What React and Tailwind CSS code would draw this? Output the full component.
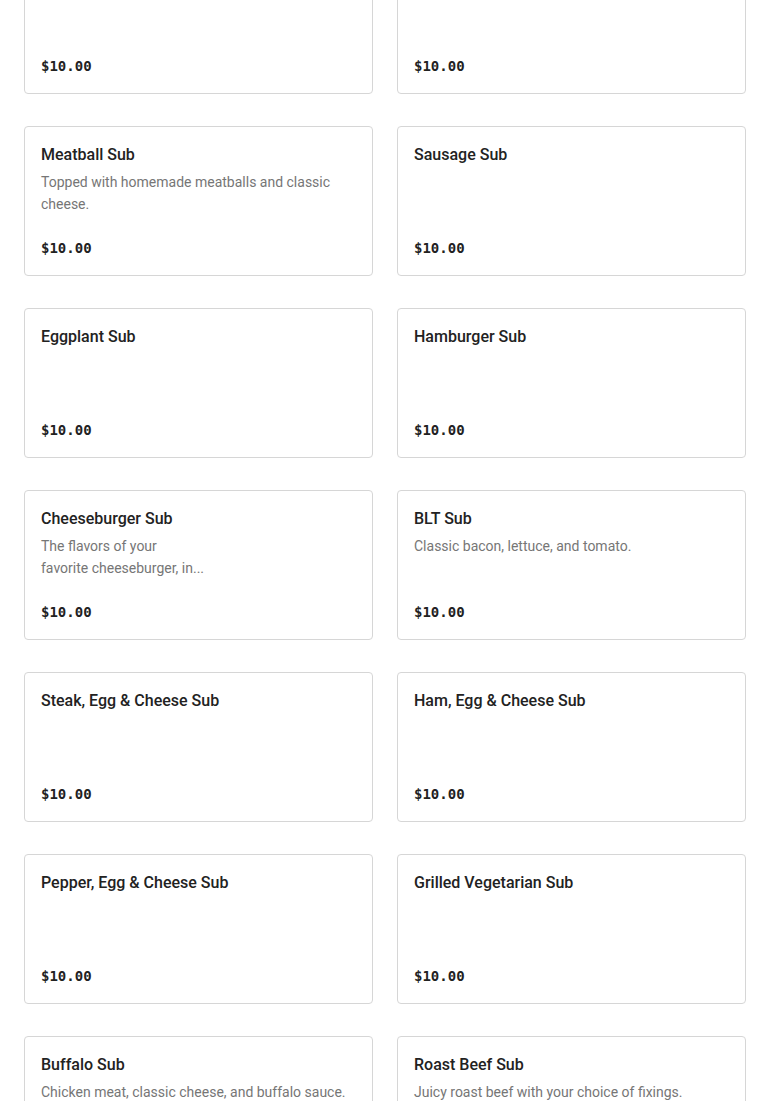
import React from 'react';

const items = [
  { name: 'Italian Sub', desc: '', price: '$10.00' },
  { name: 'Chicken Parm Sub', desc: '', price: '$10.00' },
  { name: 'Meatball Sub', desc: 'Topped with homemade meatballs and classic cheese.', price: '$10.00' },
  { name: 'Sausage Sub', desc: '', price: '$10.00' },
  { name: 'Eggplant Sub', desc: '', price: '$10.00' },
  { name: 'Hamburger Sub', desc: '', price: '$10.00' },
  { name: 'Cheeseburger Sub', desc: ['The flavors of your', 'favorite cheeseburger, in...'], price: '$10.00' },
  { name: 'BLT Sub', desc: 'Classic bacon, lettuce, and tomato.', price: '$10.00' },
  { name: 'Steak, Egg & Cheese Sub', desc: '', price: '$10.00' },
  { name: 'Ham, Egg & Cheese Sub', desc: '', price: '$10.00' },
  { name: 'Pepper, Egg & Cheese Sub', desc: '', price: '$10.00' },
  { name: 'Grilled Vegetarian Sub', desc: '', price: '$10.00' },
  { name: 'Buffalo Sub', desc: 'Chicken meat, classic cheese, and buffalo sauce.', price: '$10.00' },
  { name: 'Roast Beef Sub', desc: 'Juicy roast beef with your choice of fixings.', price: '$10.00' },
];

const MenuCard = ({ item }) => (
  <div className="h-[150px] bg-white border border-[#d6d6d6] rounded-[4px] px-4 py-4 flex flex-col justify-between">
    <div>
      <h3 className="text-base leading-6 font-medium text-[#222222]">{item.name}</h3>
      {item.desc && (
        <p className="mt-1 text-sm leading-[22px] text-[#767676]">
          {Array.isArray(item.desc) ? (
            <>
              {item.desc[0]}
              <br />
              {item.desc[1]}
            </>
          ) : (
            item.desc
          )}
        </p>
      )}
    </div>
    <p className="text-sm leading-[22px] font-bold text-[#222222] font-['DejaVu_Sans_Mono',monospace]">
      {item.price}
    </p>
  </div>
);

const App = () => {
  return (
    <div className="h-screen overflow-hidden bg-white font-['Roboto',sans-serif]">
      <div className="-mt-[56px] px-6 grid grid-cols-2 gap-x-6 gap-y-8">
        {items.map((item) => (
          <MenuCard key={item.name} item={item} />
        ))}
      </div>
    </div>
  );
};

export default App;
